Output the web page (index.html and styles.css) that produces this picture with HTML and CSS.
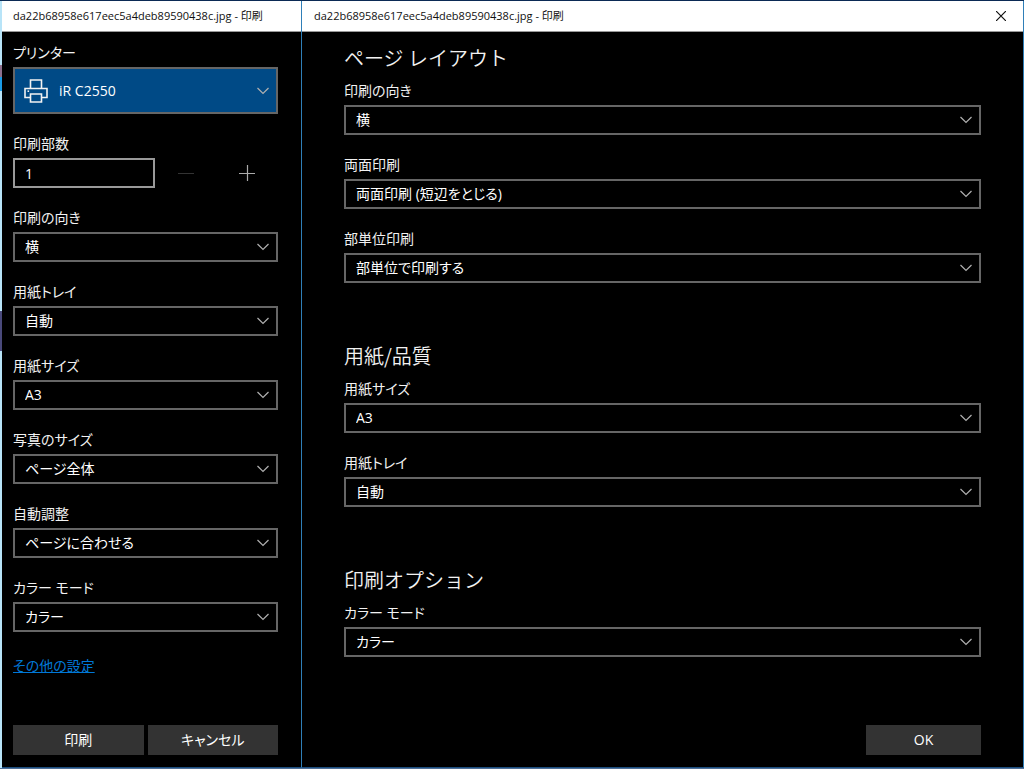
FILE: index.html
```html
<!DOCTYPE html>
<html lang="ja">
<head>
<meta charset="utf-8">
<title>印刷</title>
<link rel="stylesheet" href="styles.css">
</head>
<body>
<svg class="defs" aria-hidden="true">
  <symbol id="chevron" viewBox="0 0 12 8"><path d="M.5 1 6 6.500 11.500 1" fill="none" stroke="currentColor" stroke-width="1.200"/></symbol>
</svg>
<div class="desktop">
  <section class="window window-print">
    <header class="titlebar"><span>da22b68958e617eec5a4deb89590438c.jpg - 印刷</span></header>
    <form class="content">
      <div class="fields">
        <div class="field">
          <label for="printer">プリンター</label>
          <div class="picker picker-printer">
            <select id="printer"><option>iR C2550</option></select>
            <svg class="printer-icon" viewBox="0 0 24 24" aria-hidden="true"><g fill="none" stroke="currentColor" stroke-width="1.600"><path d="M6.500 9.500V1h11v8.500M6 18.500H1v-9h22v9h-5M6.500 15h11v8h-11z"/><path d="M3.500 12.200h1.600"/></g></svg>
            <svg class="chevron" aria-hidden="true"><use href="#chevron"/></svg>
          </div>
        </div>
        <div class="field">
          <label for="copies">印刷部数</label>
          <div class="copies">
            <input id="copies" type="text" value="1">
            <button class="step" type="button" aria-label="減らす" disabled><svg viewBox="0 0 16 16"><path d="M0 8.500h16" stroke="currentColor"/></svg></button>
            <button class="step" type="button" aria-label="増やす"><svg viewBox="0 0 16 16"><path d="M0 8.500h16M8.500 0v16" stroke="currentColor" stroke-width="1.200"/></svg></button>
          </div>
        </div>
        <div class="field">
          <label for="orientation">印刷の向き</label>
          <div class="picker"><select id="orientation"><option>横</option></select><svg class="chevron" aria-hidden="true"><use href="#chevron"/></svg></div>
        </div>
        <div class="field">
          <label for="tray">用紙トレイ</label>
          <div class="picker"><select id="tray"><option>自動</option></select><svg class="chevron" aria-hidden="true"><use href="#chevron"/></svg></div>
        </div>
        <div class="field">
          <label for="paper">用紙サイズ</label>
          <div class="picker"><select id="paper"><option>A3</option></select><svg class="chevron" aria-hidden="true"><use href="#chevron"/></svg></div>
        </div>
        <div class="field">
          <label for="photo">写真のサイズ</label>
          <div class="picker"><select id="photo"><option>ページ全体</option></select><svg class="chevron" aria-hidden="true"><use href="#chevron"/></svg></div>
        </div>
        <div class="field">
          <label for="fit">自動調整</label>
          <div class="picker"><select id="fit"><option>ページに合わせる</option></select><svg class="chevron" aria-hidden="true"><use href="#chevron"/></svg></div>
        </div>
        <div class="field">
          <label for="color">カラー モード</label>
          <div class="picker"><select id="color"><option>カラー</option></select><svg class="chevron" aria-hidden="true"><use href="#chevron"/></svg></div>
        </div>
      </div>
      <a class="more" href="#more">その他の設定</a>
      <div class="actions">
        <button class="btn" type="button">印刷</button>
        <button class="btn" type="button">キャンセル</button>
      </div>
    </form>
  </section>
  <section class="window window-more" id="more">
    <header class="titlebar">
      <span>da22b68958e617eec5a4deb89590438c.jpg - 印刷</span>
      <button class="close" type="button" aria-label="閉じる"><svg viewBox="0 0 10 10"><path d="M0 0 10 10M10 0 0 10" stroke="currentColor" stroke-width="1.200"/></svg></button>
    </header>
    <form class="content">
      <div class="groups">
        <section class="group">
          <h2>ページ レイアウト</h2>
          <div class="fields">
            <div class="field">
              <label for="m-orientation">印刷の向き</label>
              <div class="picker"><select id="m-orientation"><option>横</option></select><svg class="chevron" aria-hidden="true"><use href="#chevron"/></svg></div>
            </div>
            <div class="field">
              <label for="m-duplex">両面印刷</label>
              <div class="picker"><select id="m-duplex"><option>両面印刷 (短辺をとじる)</option></select><svg class="chevron" aria-hidden="true"><use href="#chevron"/></svg></div>
            </div>
            <div class="field">
              <label for="m-collate">部単位印刷</label>
              <div class="picker"><select id="m-collate"><option>部単位で印刷する</option></select><svg class="chevron" aria-hidden="true"><use href="#chevron"/></svg></div>
            </div>
          </div>
        </section>
        <section class="group">
          <h2>用紙/品質</h2>
          <div class="fields">
            <div class="field">
              <label for="m-paper">用紙サイズ</label>
              <div class="picker"><select id="m-paper"><option>A3</option></select><svg class="chevron" aria-hidden="true"><use href="#chevron"/></svg></div>
            </div>
            <div class="field">
              <label for="m-tray">用紙トレイ</label>
              <div class="picker"><select id="m-tray"><option>自動</option></select><svg class="chevron" aria-hidden="true"><use href="#chevron"/></svg></div>
            </div>
          </div>
        </section>
        <section class="group">
          <h2>印刷オプション</h2>
          <div class="fields">
            <div class="field">
              <label for="m-color">カラー モード</label>
              <div class="picker"><select id="m-color"><option>カラー</option></select><svg class="chevron" aria-hidden="true"><use href="#chevron"/></svg></div>
            </div>
          </div>
        </section>
      </div>
      <div class="actions">
        <button class="btn" type="button">OK</button>
      </div>
    </form>
  </section>
</div>
</body>
</html>
```

FILE: styles.css
```css
* { box-sizing: border-box; }

body {
  margin: 0;
  background: #0b2a55;
  color: #f2f2f2;
  font: 14px/20px "Open Sans", "Noto Sans CJK JP", sans-serif;
  font-feature-settings: "palt";
}

.defs { display: none; }

/* The sliver of desktop that shows to the left of the windows. */
.desktop {
  display: grid;
  grid-template-columns: 300px 1fr;
  min-height: 100vh;
  padding-left: 2px;
  background: linear-gradient(#b8e4f8 0 42px, #8d6f8c 42px 50px, #1a9be6 50px 60px, #b8e4f8 60px 310px, #4a4a7c 310px 350px, #b8e4f8 350px);
  background: linear-gradient(#b8e4f8 0 64px, #8d6f8c 64px 76px, #1a9be6 76px 90px, #b8e4f8 90px 310px, #4a4a7c 310px 350px, #b8e4f8 350px);
  border-top: 1px solid #0b2a55;
  border-bottom: 1px solid #4f6f96;
}

.window {
  display: flex;
  flex-direction: column;
  background: #000;
  border-right: 1px solid #2f7fb8;
  border-bottom: 1px solid #1d4f80;
}

.titlebar {
  display: flex;
  align-items: center;
  justify-content: space-between;
  height: 31px;
  padding: 0 17px 0 11px;
  border-bottom: 1px solid #999;
  background: #fff;
  color: #111;
  font-size: 11px;
  white-space: nowrap;
}

.close {
  display: flex;
  padding: 0;
  border: 0;
  background: none;
  color: #111;
}

.close svg { width: 10px; height: 10px; }

.content {
  display: flex;
  flex: 1;
  flex-direction: column;
  padding: 11px 23px 12px 11px;
}

.window-more .titlebar { padding-left: 12px; }
.window-more .content { padding: 13px 42px 12px; }

.fields { display: grid; gap: 20px; }
.field { display: grid; gap: 4px; }

.picker { display: grid; align-items: center; }
.picker > * { grid-area: 1 / 1; }

select,
input {
  width: 100%;
  height: 30px;
  padding: 0 32px 0 10px;
  border: 2px solid #666;
  border-radius: 0;
  background: #000;
  color: #fff;
  font: inherit;
  font-feature-settings: inherit;
  appearance: none;
}

.chevron {
  width: 12px;
  height: 8px;
  margin-right: 9px;
  justify-self: end;
  color: #b0b0b0;
  pointer-events: none;
}

.picker-printer select {
  height: 47px;
  padding-left: 44px;
  background: #004a86;
}

.printer-icon {
  width: 24px;
  height: 24px;
  margin-left: 11px;
  pointer-events: none;
}

.copies { display: flex; }

.copies input {
  width: 142px;
  padding-right: 10px;
  border-color: #999;
}

.step {
  display: grid;
  flex: 1;
  place-items: center;
  padding: 0;
  border: 0;
  background: none;
  color: #aaa;
}

.step:disabled { color: #333; }
.step svg { width: 16px; height: 16px; }

.more {
  align-self: flex-start;
  margin-top: 24px;
  color: #0078d7;
}

.groups { display: grid; gap: 60px; }

h2 {
  margin: 0 0 10px;
  font: 350 20px/26px "Noto Sans CJK JP", sans-serif;
}

.actions {
  display: flex;
  gap: 4px;
  margin-top: auto;
}

.btn {
  flex: 1;
  height: 30px;
  padding: 0;
  border: 0;
  background: #333;
  color: #fff;
  font: inherit;
  font-feature-settings: inherit;
}

.window-more .actions { justify-content: flex-end; }
.window-more .btn { flex: 0 0 115px; }
```
